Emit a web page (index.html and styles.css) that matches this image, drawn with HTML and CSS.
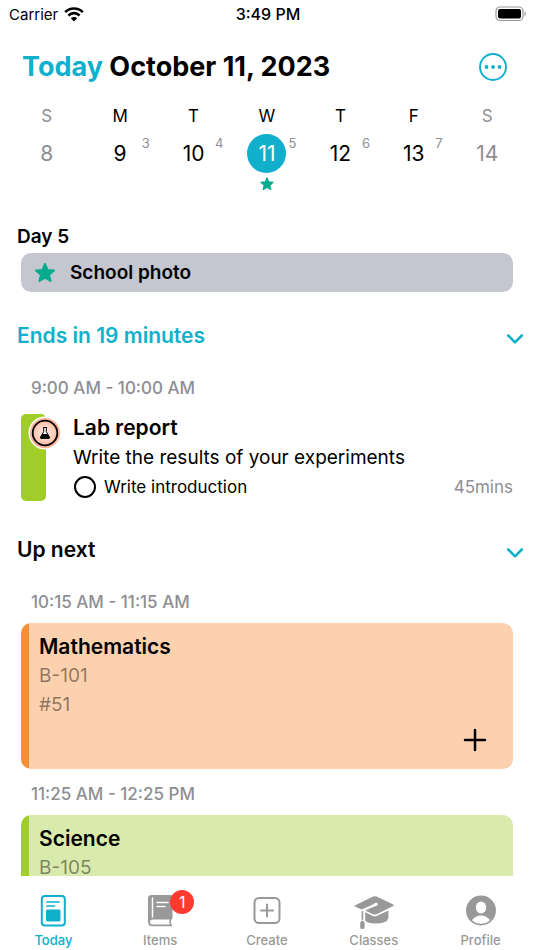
FILE: index.html
```html
<!DOCTYPE html>
<html lang="en">
<head>
<meta charset="utf-8">
<meta name="viewport" content="width=device-width, initial-scale=1">
<title>Today</title>
<link rel="stylesheet" href="styles.css">
</head>
<body>
<div class="status">
  <div class="carrier">Carrier
    <svg width="20" height="15" viewBox="0 0 20 15" fill="none" stroke="#000" stroke-width="2.7"><path d="M1.2 5.1a12.5 12.5 0 0 1 17.6 0M4.4 8.5a8 8 0 0 1 11.2 0"/><path d="M10 14.5 6.8 11.3a4.6 4.6 0 0 1 6.4 0z" fill="#000" stroke="none"/></svg>
  </div>
  <div class="clock">3:49 PM</div>
  <svg class="battery" width="32" height="16" viewBox="0 0 32 16"><rect x="1" y="1" width="27" height="13.5" rx="4" fill="none" stroke="#999" stroke-width="1.2"/><rect x="3" y="3" width="23" height="9.5" rx="2"/><path d="M29.5 5.5q3 2.2 0 4.5z" fill="#999"/></svg>
</div>
<header class="header">
  <h1><span class="accent">Today</span> October 11, 2023</h1>
  <button class="icon-button" aria-label="More options"><svg width="30" height="30" viewBox="0 0 30 30"><circle cx="15" cy="15" r="13" fill="none" stroke="#10b0cc" stroke-width="1.9"/><g fill="#10b0cc"><circle cx="8.5" cy="15" r="1.9"/><circle cx="15" cy="15" r="1.9"/><circle cx="21.5" cy="15" r="1.9"/></g></svg></button>
</header>
<nav class="week" aria-label="Week">
  <button class="day muted"><span class="name">S</span><span class="date">8</span></button>
  <button class="day"><span class="name">M</span><span class="date">9<span class="cycle">3</span></span></button>
  <button class="day"><span class="name">T</span><span class="date">10<span class="cycle">4</span></span></button>
  <button class="day selected"><span class="name">W</span><span class="date">11<span class="cycle">5</span></span><svg width="16" height="16" viewBox="0 0 24 24"><path class="star" d="m12 3 2.5 6 6.500.5-5 4.200 1.600 6.300-5.600-3.400-5.600 3.400 1.600-6.300-5-4.200 6.500-.5z"/></svg></button>
  <button class="day"><span class="name">T</span><span class="date">12<span class="cycle">6</span></span></button>
  <button class="day"><span class="name">F</span><span class="date">13<span class="cycle">7</span></span></button>
  <button class="day muted"><span class="name">S</span><span class="date">14</span></button>
</nav>
<main class="agenda">
  <h2 class="cycle-title">Day 5</h2>
  <div class="banner"><svg width="24" height="24" viewBox="0 0 24 24"><path class="star" d="m12 3 2.5 6 6.500.5-5 4.200 1.600 6.300-5.600-3.400-5.600 3.400 1.600-6.300-5-4.200 6.500-.5z"/></svg>School photo</div>

  <div class="section-head">
    <h2 class="current">Ends in 19 minutes</h2>
    <button class="icon-button" aria-label="Collapse current"><svg width="18" height="12" viewBox="0 0 18 12"><path class="chevron" d="m2.2 2.5 6.8 6.8 6.8-6.8"/></svg></button>
  </div>
  <p class="time">9:00 AM - 10:00 AM</p>
  <article class="task">
    <div class="subject-bar"><svg class="badge" width="34" height="34" viewBox="0 0 34 34">
      <defs><radialGradient id="glow"><stop offset="0" stop-color="#fff0eb"/><stop offset="1" stop-color="#ffae90"/></radialGradient></defs>
      <circle cx="17" cy="17" r="15.8" fill="url(#glow)" stroke="#fff" stroke-width="1.4"/><circle cx="17" cy="17" r="12.3" fill="none" stroke="#000" stroke-width="1.8"/>
      <path d="M15.1 11.5h3.8M15.7 11.5v4.2l-3.2 5.4q-.4 1.2.7 1.2h7.6q1.1 0 .7-1.2l-3.2-5.4v-4.2" fill="#fff6f2" stroke="#000"/><path d="m14.6 18-2.2 3.500q0 1.200 1 1.200h7.200q1 0 1-1.200L19.400 18z"/></svg></div>
    <div class="task-body">
      <h3>Lab report</h3>
      <p>Write the results of your experiments</p>
      <div class="step"><label><input type="checkbox">Write introduction</label><span class="duration">45mins</span></div>
    </div>
  </article>

  <div class="section-head">
    <h2>Up next</h2>
    <button class="icon-button" aria-label="Collapse up next"><svg width="18" height="12" viewBox="0 0 18 12"><path class="chevron" d="m2.2 2.5 6.8 6.8 6.8-6.8"/></svg></button>
  </div>
  <p class="time">10:15 AM - 11:15 AM</p>
  <article class="lesson orange">
    <h3>Mathematics</h3><p>B-101</p><p>#51</p>
    <button class="icon-button add" aria-label="Add to Mathematics"><svg width="24" height="24" viewBox="0 0 24 24"><path d="M12 2v20M2 12h20" stroke="#000" stroke-width="2.5" stroke-linecap="round"/></svg></button>
  </article>
  <p class="time">11:25 AM - 12:25 PM</p>
  <article class="lesson green">
    <h3>Science</h3><p>B-105</p>
  </article>
</main>
<nav class="tabs" aria-label="Main">
  <a href="#" class="active"><span class="tab-icon"><svg width="40" height="36" viewBox="0 0 40 36"><rect x="8.8" y="3" width="23" height="29.5" rx="3" fill="none" stroke="#10b0cc" stroke-width="2"/><path d="M14 9h12M14 13h7.5" stroke="#10b0cc" stroke-width="1.7" stroke-linecap="round"/><rect x="13" y="16.5" width="14.5" height="12" rx="1.5" fill="#10b0cc"/></svg></span>Today</a>
  <a href="#"><span class="tab-icon"><svg width="40" height="36" viewBox="0 0 40 36"><path d="M11.5 2h18.5q2.500 0 2.500 2.500V25q0 1.300-1.300 1.700-1.200 3 .8 5.300.4 1.300-1 1.300H12.500q-4.500 0-4.500-4.500V5.500q0-3.500 3.500-3.500z" fill="#999"/><path d="M12.500 5v19M17 9.500h11M17 13.500h8" stroke="#fff" stroke-width="1.500" stroke-linecap="round"/><path d="M12.500 26.500h17.200q-1.100 2.500.1 5H12.500a2.500 2.500 0 0 1 0-5z" fill="#fff"/></svg><span class="count">1</span></span>Items</a>
  <a href="#"><span class="tab-icon"><svg width="40" height="36" viewBox="0 0 40 36" fill="none" stroke="#999" stroke-width="2"><rect x="7.5" y="5" width="25" height="25" rx="4.5"/><path d="M20 11.5v12M14 17.5h12" stroke-linecap="round"/></svg></span>Create</a>
  <a href="#"><span class="tab-icon"><svg width="42" height="38" viewBox="0 0 42 38" fill="#999"><path d="M1.800 12.400 20 3.600q1.800-.8 3.600 0l16.200 7.700q2 1 0 2L23.600 21.200q-1.800.8-3.600 0l-8-3.700 10.600-4.600q2.400.1 2.300-1.700-.5-2-3-1.300l-1.400 1.300L8.700 16.500 1.800 13.400q-1-.5 0-1z"/><path d="M12.200 19.300 20 23q1.800.8 3.600 0l11.800-5.600v7.800q-1.500 5.300-13.500 5.400-6 0-9.700-2.500zM8.600 18h1.600v9h-1.600z"/><path d="M8.500 28q.9-1 1.800 0l1.300 1.800v5.500q-2.200 1.500-4.400 0v-5.500z"/></svg></span>Classes</a>
  <a href="#"><span class="tab-icon"><svg width="40" height="36" viewBox="0 0 40 36"><circle cx="20" cy="17.5" r="15" fill="#999"/><ellipse cx="20" cy="14.5" rx="5.2" ry="6" fill="#fff"/><path d="M11 27.200q3.300-4.700 9-4.700t9 4.700q-3.700 3.500-9 3.500t-9-3.500z" fill="#fff"/></svg></span>Profile</a>
</nav>
</body>
</html>
```
FILE: styles.css
```css
* { box-sizing: border-box; }
body {
  margin: 0;
  height: 100vh;
  display: flex;
  flex-direction: column;
  overflow: hidden;
  background: #fff;
  color: #000;
  font-family: Inter, "Liberation Sans", sans-serif;
}
h1, h2, h3, p { margin: 0; }
svg { display: block; flex: none; }
button { border: 0; padding: 0; background: none; color: inherit; font: inherit; }
.icon-button { display: flex; }

.status {
  display: grid;
  grid-template-columns: 1fr auto 1fr;
  align-items: center;
  height: 28px;
  padding: 0 7px 0 9px;
  font-size: 15px;
}
.carrier { display: flex; align-items: center; gap: 6px; }
.clock { font-size: 16px; line-height: 20px; font-weight: 500; }
.battery { justify-self: end; }

.header {
  display: flex;
  align-items: center;
  justify-content: space-between;
  height: 77px;
  padding: 1px 26px 0 22px;
}
h1 { font-size: 27px; line-height: 36px; font-weight: 700; }
.accent { color: #10b0cc; }

.week {
  display: grid;
  grid-template-columns: repeat(7, 1fr);
  height: 99px;
  padding: 0 10px;
}
.day { display: flex; flex-direction: column; align-items: center; }
.name { font-size: 17px; line-height: 22px; margin-bottom: 7px; }
.date { position: relative; width: 39px; line-height: 40px; height: 39px; font-size: 21px; text-align: center; }
.cycle { position: absolute; left: 41px; top: 0; font-size: 13px; line-height: 18px; color: #8e8e93; }
.muted { color: #8e8e93; }
.selected .date { border-radius: 50%; background: #10b0cc; color: #fff; }
.selected svg { margin-top: 3px; }
.star { fill: #06ab8e; stroke: #06ab8e; stroke-width: 2; stroke-linejoin: round; }

.agenda { flex: 1; min-height: 0; overflow: hidden; padding: 20px 21px 0; }
h2 { font-size: 21px; line-height: 32px; font-weight: 600; }
.cycle-title { margin-left: -4px; font-size: 19px; line-height: 26px; }
.banner {
  display: flex;
  align-items: center;
  gap: 13px;
  height: 39px;
  margin-top: 3px;
  padding: 0 12px;
  border-radius: 10px;
  background: #c4c7d0;
  font-size: 19px;
  font-weight: 600;
}
.section-head {
  display: flex;
  align-items: center;
  justify-content: space-between;
  margin: 28px -11px 24px -4px;
}
.section-head .icon-button { padding-top: 5px; }
.current { color: #10b0cc; }
.chevron { fill: none; stroke: #10b0cc; stroke-width: 2.5; stroke-linecap: round; stroke-linejoin: round; }
.time { padding-left: 10px; font-size: 17px; line-height: 25px; font-weight: 500; color: #8e8e93; }
.task { display: flex; gap: 27px; margin: 13px 0 33px; }
.subject-bar { position: relative; width: 25px; border-radius: 5px; background: #a0cd2a; }
.badge { position: absolute; left: 7px; top: 2px; }
.task-body { flex: 1; }
h3 { font-size: 21px; line-height: 28px; font-weight: 600; }
.task-body p { font-size: 19px; line-height: 31px; }
.step { display: flex; align-items: center; justify-content: space-between; height: 28px; font-size: 17px; }
.step label { display: flex; align-items: center; gap: 8px; }
.step input { appearance: none; width: 22px; height: 22px; margin: 0 0 0 1px; border: 2px solid #000; border-radius: 50%; }
.duration { color: #8e8e93; }
.lesson {
  position: relative;
  height: 146px;
  margin: 8px 0 13px;
  padding: 10px 18px;
  border-radius: 10px;
}
.lesson p { font-size: 19px; line-height: 29px; color: rgba(0, 0, 0, .45); }
.orange { background: linear-gradient(90deg, #f68f34 8px, #fcd1ae 8px); }
.green { background: linear-gradient(90deg, #a0cd2a 8px, #d8ebac 8px); }
.add { position: absolute; right: 26px; bottom: 17px; }

.tabs { display: grid; grid-template-columns: repeat(5, 1fr); height: 74px; padding-top: 17px; background: #fff; }
.tabs a {
  display: flex;
  flex-direction: column;
  align-items: center;
  color: #999;
  font-size: 13px;
  line-height: 16px;
  font-weight: 500;
  text-decoration: none;
}
.tabs .active { color: #10b0cc; }
.tab-icon { position: relative; height: 39px; }
.count {
  position: absolute;
  left: 30px;
  top: -3px;
  width: 24px;
  line-height: 24px;
  border-radius: 50%;
  background: #ff3b30;
  color: #fff;
  font-size: 16px;
  font-weight: 400;
  text-align: center;
}
```
